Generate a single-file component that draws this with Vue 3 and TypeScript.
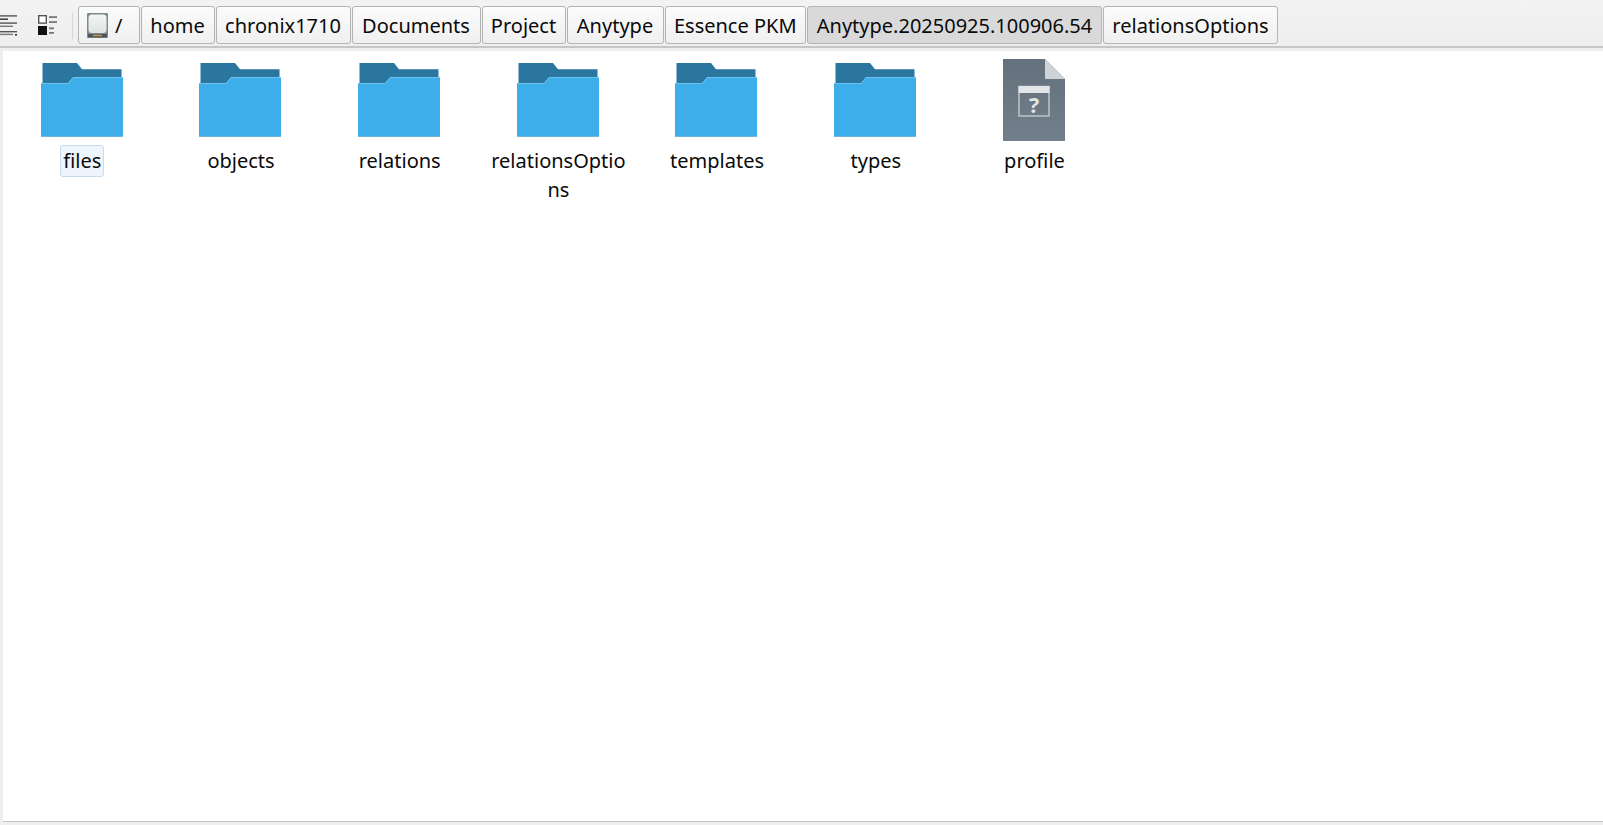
<script setup lang="ts">
const crumbs: { label: string; active?: boolean; width: number }[] = [
  { label: 'home', width: 74 },
  { label: 'chronix1710', width: 135 },
  { label: 'Documents', width: 129 },
  { label: 'Project', width: 84 },
  { label: 'Anytype', width: 97 },
  { label: 'Essence PKM', width: 141.5 },
  { label: 'Anytype.20250925.100906.54', active: true, width: 295 },
  { label: 'relationsOptions', width: 175 },
]
const items: { name: string; kind: 'folder' | 'file'; current?: boolean }[] = [
  { name: 'files', kind: 'folder', current: true },
  { name: 'objects', kind: 'folder' },
  { name: 'relations', kind: 'folder' },
  { name: 'relationsOptions', kind: 'folder' },
  { name: 'templates', kind: 'folder' },
  { name: 'types', kind: 'folder' },
  { name: 'profile', kind: 'file' },
]
</script>

<template>
  <div class="window">
    <header class="toolbar">
      <svg class="tool tool-list" width="19" height="22" viewBox="0 0 19 22">
        <g>
          <rect x="0" y="0.2" width="17" height="1.4" fill="#555" />
          <rect x="0" y="3.4" width="8" height="1.6" fill="#444" />
          <rect x="0" y="7.4" width="17" height="1.4" fill="#555" />
          <rect x="0" y="10.6" width="13" height="1.4" fill="#777" />
          <rect x="0" y="16" width="17" height="1.4" fill="#555" />
          <rect x="0" y="18.7" width="13" height="1.4" fill="#777" />
          <rect x="15" y="19" width="2" height="1.6" fill="#333" />
        </g>
      </svg>
      <svg class="tool tool-detail" width="21" height="20" viewBox="0 0 21 20">
        <rect x="0.7" y="0.7" width="7.6" height="7.4" fill="#fff" stroke="#555" stroke-width="1.4" />
        <rect x="0" y="11" width="9" height="9" fill="#111" />
        <g fill="#777">
          <rect x="11" y="1.2" width="8" height="1.8" />
          <rect x="11" y="6.2" width="8" height="1.8" />
          <rect x="11" y="12.4" width="5" height="1.8" />
          <rect x="11" y="17" width="5" height="1.8" />
        </g>
      </svg>
      <span class="sep"></span>
      <nav class="crumbs">
        <button class="crumb root">
          <svg width="21" height="25" viewBox="0 0 21 25">
            <defs>
              <linearGradient id="disk" x1="0" y1="0" x2="0" y2="1">
                <stop offset="0" stop-color="#f4f5f5" />
                <stop offset="1" stop-color="#dfe3e3" />
              </linearGradient>
            </defs>
            <rect x="0" y="0" width="21" height="25" rx="1" fill="#7f8c8d" />
            <rect x="1.5" y="1.5" width="18" height="18.5" rx="3.5" fill="url(#disk)" />
            <rect x="1" y="21" width="19" height="3.4" fill="#4d5656" />
            <rect x="6" y="21.8" width="9" height="1.4" fill="#c9a050" />
          </svg>
          <span>/</span>
        </button>
        <button
          v-for="c in crumbs"
          :key="c.label"
          class="crumb"
          :class="{ active: c.active }"
          :style="{ width: c.width + 'px' }"
        >{{ c.label }}</button>
      </nav>
    </header>
    <main class="view">
      <div class="grid">
        <div v-for="it in items" :key="it.name" class="item">
          <svg v-if="it.kind === 'folder'" class="icon icon-folder" width="82" height="74" viewBox="0 0 82 74">
            <path d="M1.5 0H36L41 6.3H80.5V20H1.5Z" fill="#2a769f" />
            <path d="M0 20H27L32 14H82V74H0Z" fill="#3daee9" />
            <path d="M0 20.5H27.2L32.2 14.5H82" fill="none" stroke="#6cc1ee" stroke-width="1" />
            <rect x="0" y="73" width="82" height="1" fill="#6eb6dd" />
          </svg>
          <svg v-else class="icon icon-file" width="62" height="82" viewBox="0 0 62 82">
            <defs>
              <linearGradient id="doc" x1="0" y1="0" x2="0" y2="1">
                <stop offset="0" stop-color="#64717d" />
                <stop offset="1" stop-color="#727f8a" />
              </linearGradient>
            </defs>
            <path d="M0 0H42L62 20V82H0Z" fill="url(#doc)" />
            <path d="M42 0L62 20H42Z" fill="#ced3d6" />
            <rect x="16" y="27.5" width="30" height="29.5" fill="none" stroke="#c3cacf" stroke-width="1.4" />
            <rect x="15.5" y="27" width="31" height="7" fill="#e2e6e8" />
            <text x="31" y="53.6" text-anchor="middle" class="glyph">?</text>
          </svg>
          <span class="name" :class="{ current: it.current }">{{ it.name }}</span>
        </div>
      </div>
    </main>
  </div>
</template>

<style>
html, body { margin: 0; background: #eff0f1; overflow: hidden; }
</style>

<style scoped>
.window {
  width: 1603px;
  height: 825px;
  display: flex;
  flex-direction: column;
  background: #efefef;
  font-family: "Noto Sans", sans-serif;
  font-size: 20px;
  color: #0a0a0a;
  overflow: hidden;
}
.toolbar {
  height: 48px;
  flex: none;
  box-sizing: border-box;
  display: flex;
  align-items: flex-start;
  background: linear-gradient(#f3f3f3, #eeeeee);
  border-bottom: 2px solid #c6c6c6;
  padding-top: 6px;
}
.tool-list { margin-top: 8.5px; }
.tool-detail { margin-top: 9px; margin-left: 19px; }
.sep { width: 1px; height: 26px; background: #d6d6d6; margin: 7px 5px 0 13px; }
.crumbs { display: flex; gap: 1px; }
.crumb {
  box-sizing: border-box;
  height: 38px;
  padding: 0;
  border: 1px solid #b4b4b4;
  border-radius: 3px;
  background: linear-gradient(#fbfbfb, #f0f0f0);
  font: inherit;
  color: inherit;
  display: flex;
  align-items: center;
  justify-content: center;
  white-space: nowrap;
}
.crumb.root { width: 61.5px; gap: 7px; justify-content: flex-start; padding-left: 8px; }
.crumb.active { background: #d9d9d9; }
.view {
  flex: 1;
  margin: 3px 0 3px 3px;
  background: #fff;
  border-bottom: 1px solid #c4c4c4;
}
.grid { display: flex; padding-top: 11px; margin-left: -0.7px; }
.item {
  width: 158.7px;
  flex: none;
  display: flex;
  flex-direction: column;
  align-items: center;
}
.icon { display: block; }
.icon-folder { margin: 1px 0 9px; }
.icon-file { margin: -3px 0 5px; }
.name {
  display: block;
  width: 138px;
  margin-left: 1.4px;
  text-align: center;
  line-height: 29px;
  overflow-wrap: anywhere;
}
.name.current {
  width: auto;
  line-height: 30px;
  padding: 0 2px;
  margin-top: -1px;
  background: #eef5fc;
  border: 1px solid #c4dcf0;
  border-radius: 3px;
}
.glyph { font: 700 22px "Noto Sans", sans-serif; fill: #dfe3e6; }
</style>
